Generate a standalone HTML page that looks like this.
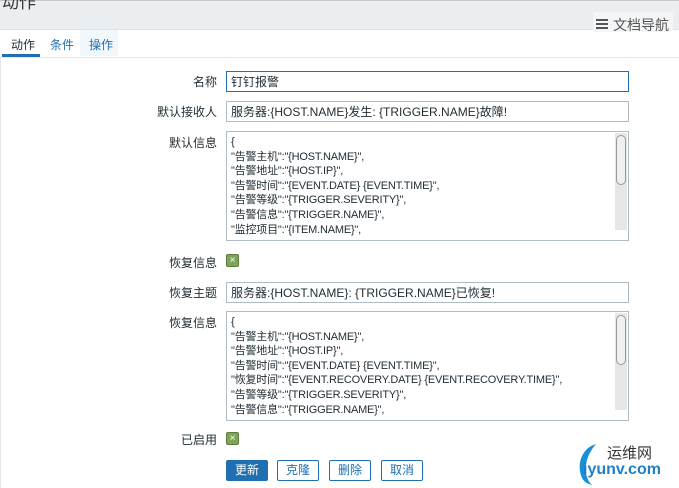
<!DOCTYPE html><html><head><meta charset="utf-8"><style>
body{margin:0;width:679px;height:488px;overflow:hidden;background:#fff;font-family:"Liberation Sans","Noto Sans CJK SC",sans-serif;font-size:12px;color:#1f2c33;position:relative}
.a{position:absolute}
.top{left:0;top:0;width:679px;height:30px;background:#ebeef0;border-top:1px solid #c8c8c8;border-bottom:1px solid #dfe2e4;box-sizing:border-box}
.lab{right:462px;text-align:right;font-size:12px;color:#1f2c33}
.in{left:226px;width:403px;height:21px;border:1px solid #acbbc4;box-sizing:border-box;padding:3px 4px;line-height:14px;font-size:12px;white-space:nowrap}
.ta{left:226px;width:403px;height:110px;border:1px solid #acbbc4;box-sizing:border-box;padding:3px 4px;line-height:14.6px;font-size:11px;overflow:hidden;letter-spacing:-0.2px}
.sb{right:1px;top:1px;width:12px;bottom:10px;background:#e6e6e6}
.sb div{position:absolute;left:1px;top:2px;width:8px;height:48px;border:1px solid #999;border-radius:5px;background:#f0f0f0}
.cb{width:13px;height:13px;background:#7ea35b;border:1px solid #5b7d3c;border-radius:2px;box-sizing:border-box;color:#fff;font-size:10px;line-height:11px;text-align:center}
.btn{top:460px;height:21px;width:42px;border:1px solid #1f6fb2;box-sizing:border-box;color:#1f6fb2;text-align:center;line-height:19px;border-radius:2px;background:#fff}
</style></head><body>
<div class="a top"></div>
<div class="a" style="left:2px;top:-12px;font-size:17px;color:#333">动作</div>
<div class="a" style="left:593px;top:12px;width:80px;height:20px;background:#f4f5f6;border-radius:3px"></div>
<div class="a" style="left:596px;top:19px;width:12px;height:2px;background:#555;box-shadow:0 4px 0 #555,0 8px 0 #555"></div>
<div class="a" style="left:613px;top:15px;font-size:14px;color:#555">文档导航</div>
<div class="a" style="left:0;top:30px;width:679px;height:27px;border-bottom:1px solid #e5e8ea"></div>
<div class="a" style="left:80px;top:30px;width:38px;height:26px;background:#f2f7fb"></div>
<div class="a" style="left:11px;top:36px;color:#1f2c33">动作</div>
<div class="a" style="left:2px;top:54px;width:38px;height:3px;background:#1f6fb2"></div>
<div class="a" style="left:50px;top:36px;color:#1f6fb2">条件</div>
<div class="a" style="left:89px;top:36px;color:#1f6fb2">操作</div>
<div class="a" style="left:0;top:58px;width:1px;height:430px;background:#e5e8ea"></div>
<div class="a lab" style="top:73px">名称</div>
<div class="a in" style="top:71px;border-color:#1f6fb2">钉钉报警</div>
<div class="a lab" style="top:103px">默认接收人</div>
<div class="a in" style="top:101px">服务器:{HOST.NAME}发生: {TRIGGER.NAME}故障!</div>
<div class="a lab" style="top:134px">默认信息</div>
<div class="a ta" style="top:131px">{<br>"告警主机":"{HOST.NAME}",<br>"告警地址":"{HOST.IP}",<br>"告警时间":"{EVENT.DATE} {EVENT.TIME}",<br>"告警等级":"{TRIGGER.SEVERITY}",<br>"告警信息":"{TRIGGER.NAME}",<br>"监控项目":"{ITEM.NAME}",<div class="a sb"><div></div></div></div>
<div class="a lab" style="top:254px">恢复信息</div>
<div class="a cb" style="left:226px;top:254px">×</div>
<div class="a lab" style="top:284px">恢复主题</div>
<div class="a in" style="top:282px">服务器:{HOST.NAME}: {TRIGGER.NAME}已恢复!</div>
<div class="a lab" style="top:314px">恢复信息</div>
<div class="a ta" style="top:311px">{<br>"告警主机":"{HOST.NAME}",<br>"告警地址":"{HOST.IP}",<br>"告警时间":"{EVENT.DATE} {EVENT.TIME}",<br>"恢复时间":"{EVENT.RECOVERY.DATE} {EVENT.RECOVERY.TIME}",<br>"告警等级":"{TRIGGER.SEVERITY}",<br>"告警信息":"{TRIGGER.NAME}",<div class="a sb"><div></div></div></div>
<div class="a lab" style="top:431px">已启用</div>
<div class="a cb" style="left:226px;top:432px">×</div>
<div class="a btn" style="left:226px;background:#1f6fb2;color:#fff">更新</div>
<div class="a btn" style="left:277px">克隆</div>
<div class="a btn" style="left:329px">删除</div>
<div class="a btn" style="left:381px">取消</div>
<svg class="a" style="left:574px;top:440px" width="30" height="46"><path d="M22 4 C8 8 2 24 8 38 C10 42 14 44 18 45 C10 38 8 20 22 4Z" fill="#1a8fd6"/></svg>
<div class="a" style="left:607px;top:442px;font-size:15px;color:#333">运维网</div>
<div class="a" style="left:583px;top:461px;font-size:16px;font-weight:bold;color:#1f7fc8">iyunv.com</div>
</body></html>
